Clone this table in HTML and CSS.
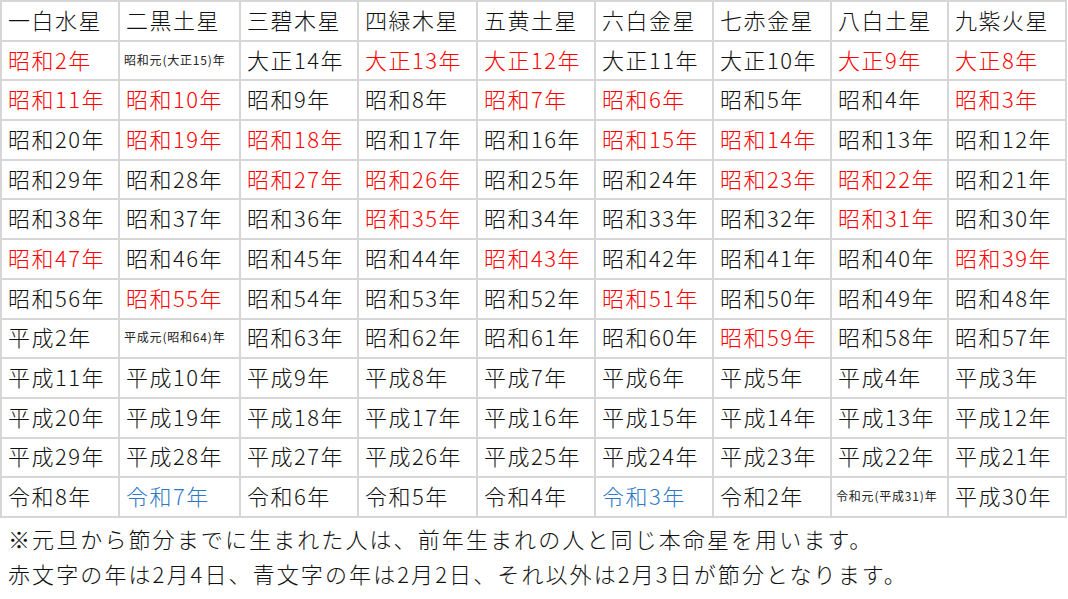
FILE: index.html
```html
<!DOCTYPE html>
<html lang="ja">
<head>
<meta charset="utf-8">
<link rel="stylesheet" href="styles.css">
</head>
<body>
<div class="grid">
  <div class="c">一白水星</div><div class="c">二黒土星</div><div class="c">三碧木星</div><div class="c">四緑木星</div><div class="c">五黄土星</div><div class="c">六白金星</div><div class="c">七赤金星</div><div class="c">八白土星</div><div class="c">九紫火星</div>

  <div class="c r">昭和2年</div><div class="c s">昭和元(大正15)年</div><div class="c">大正14年</div><div class="c r">大正13年</div><div class="c r">大正12年</div><div class="c">大正11年</div><div class="c">大正10年</div><div class="c r">大正9年</div><div class="c r">大正8年</div>

  <div class="c r">昭和11年</div><div class="c r">昭和10年</div><div class="c">昭和9年</div><div class="c">昭和8年</div><div class="c r">昭和7年</div><div class="c r">昭和6年</div><div class="c">昭和5年</div><div class="c">昭和4年</div><div class="c r">昭和3年</div>

  <div class="c">昭和20年</div><div class="c r">昭和19年</div><div class="c r">昭和18年</div><div class="c">昭和17年</div><div class="c">昭和16年</div><div class="c r">昭和15年</div><div class="c r">昭和14年</div><div class="c">昭和13年</div><div class="c">昭和12年</div>

  <div class="c">昭和29年</div><div class="c">昭和28年</div><div class="c r">昭和27年</div><div class="c r">昭和26年</div><div class="c">昭和25年</div><div class="c">昭和24年</div><div class="c r">昭和23年</div><div class="c r">昭和22年</div><div class="c">昭和21年</div>

  <div class="c">昭和38年</div><div class="c">昭和37年</div><div class="c">昭和36年</div><div class="c r">昭和35年</div><div class="c">昭和34年</div><div class="c">昭和33年</div><div class="c">昭和32年</div><div class="c r">昭和31年</div><div class="c">昭和30年</div>

  <div class="c r">昭和47年</div><div class="c">昭和46年</div><div class="c">昭和45年</div><div class="c">昭和44年</div><div class="c r">昭和43年</div><div class="c">昭和42年</div><div class="c">昭和41年</div><div class="c">昭和40年</div><div class="c r">昭和39年</div>

  <div class="c">昭和56年</div><div class="c r">昭和55年</div><div class="c">昭和54年</div><div class="c">昭和53年</div><div class="c">昭和52年</div><div class="c r">昭和51年</div><div class="c">昭和50年</div><div class="c">昭和49年</div><div class="c">昭和48年</div>

  <div class="c">平成2年</div><div class="c s">平成元(昭和64)年</div><div class="c">昭和63年</div><div class="c">昭和62年</div><div class="c">昭和61年</div><div class="c">昭和60年</div><div class="c r">昭和59年</div><div class="c">昭和58年</div><div class="c">昭和57年</div>

  <div class="c">平成11年</div><div class="c">平成10年</div><div class="c">平成9年</div><div class="c">平成8年</div><div class="c">平成7年</div><div class="c">平成6年</div><div class="c">平成5年</div><div class="c">平成4年</div><div class="c">平成3年</div>

  <div class="c">平成20年</div><div class="c">平成19年</div><div class="c">平成18年</div><div class="c">平成17年</div><div class="c">平成16年</div><div class="c">平成15年</div><div class="c">平成14年</div><div class="c">平成13年</div><div class="c">平成12年</div>

  <div class="c">平成29年</div><div class="c">平成28年</div><div class="c">平成27年</div><div class="c">平成26年</div><div class="c">平成25年</div><div class="c">平成24年</div><div class="c">平成23年</div><div class="c">平成22年</div><div class="c">平成21年</div>

  <div class="c">令和8年</div><div class="c b">令和7年</div><div class="c">令和6年</div><div class="c">令和5年</div><div class="c">令和4年</div><div class="c b">令和3年</div><div class="c">令和2年</div><div class="c s">令和元(平成31)年</div><div class="c">平成30年</div>
</div>
<div class="note">
  <p>※元旦から節分までに生まれた人は、前年生まれの人と同じ本命星を用います。</p>
  <p>赤文字の年は2月4日、青文字の年は2月2日、それ以外は2月3日が節分となります。</p>
</div>
</body>
</html>
```
FILE: styles.css
```css
html, body {
  margin: 0;
  padding: 0;
  background: #ffffff;
}
body {
  font-family: "Noto Sans CJK JP", "Noto Sans", sans-serif;
  font-weight: 300;
  color: #111111;
  width: 1068px;
  height: 599px;
  overflow: hidden;
}
.grid {
  display: grid;
  width: 1067px;
  box-sizing: border-box;
  grid-template-columns: 116px 119px 116px 117px 116px 116px 116px 115px 116px;
  grid-auto-rows: 37.7px;
  gap: 2px;
  padding: 2px;
  background: #d6d6d6;
}
.c {
  background: #ffffff;
  display: flex;
  align-items: center;
  padding-left: 6px;
  padding-bottom: 4px;
  box-sizing: border-box;
  font-size: 22px;
  letter-spacing: 1.5px;
  white-space: nowrap;
  overflow: hidden;
  line-height: 1;
}
.r { color: #ff0000; }
.b { color: #2e78c8; }
.s {
  font-size: 12px;
  font-weight: 400;
  letter-spacing: 0.8px;
  padding-left: 4px;
  padding-bottom: 2px;
  color: #222222;
}
.note {
  padding: 3px 0 0 8px;
}
.note p {
  margin: 0;
  font-size: 22px;
  letter-spacing: 2.1px;
  line-height: 35px;
  white-space: nowrap;
}
```
